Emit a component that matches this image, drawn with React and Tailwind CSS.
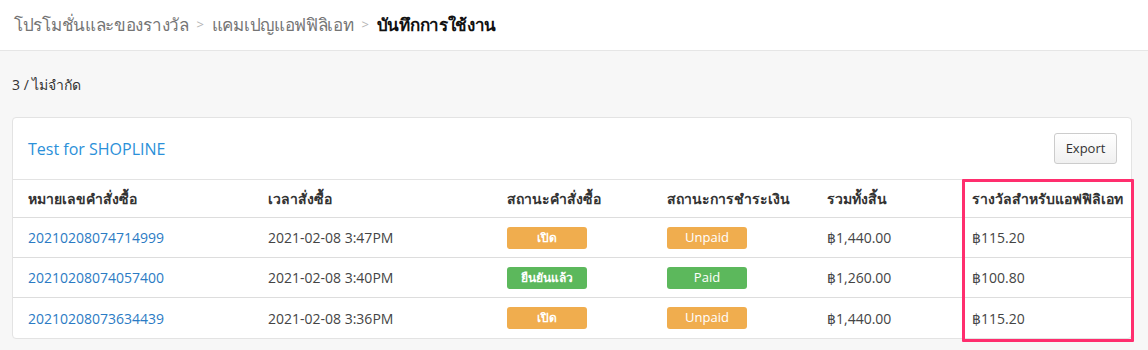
import React from "react";

const rows = [
  { id: "20210208074714999", time: "2021-02-08 3:47PM", status: "เปิด", statusColor: "bg-[#f0ad4e]", pay: "Unpaid", payColor: "bg-[#f0ad4e]", total: "฿1,440.00", reward: "฿115.20" },
  { id: "20210208074057400", time: "2021-02-08 3:40PM", status: "ยืนยันแล้ว", statusColor: "bg-[#5cb85c]", pay: "Paid", payColor: "bg-[#5cb85c]", total: "฿1,260.00", reward: "฿100.80" },
  { id: "20210208073634439", time: "2021-02-08 3:36PM", status: "เปิด", statusColor: "bg-[#f0ad4e]", pay: "Unpaid", payColor: "bg-[#f0ad4e]", total: "฿1,440.00", reward: "฿115.20" },
];

const grid = "grid grid-cols-[240px_239px_160px_160px_145px_1fr]";

export default function App() {
  return (
    <div className="relative w-[1148px] h-[350px] overflow-hidden bg-[#f7f7f7] text-[#333] font-['Open_Sans',sans-serif]">
      <div className="h-[51px] bg-white border-b border-[#e6e6e6] flex items-center pl-[14px] text-[17px] tracking-[-0.3px]">
        <span className="text-[#757575]">โปรโมชั่นและของรางวัล</span>
        <span className="text-[#b5b5b5] mx-[8px] text-[13px]">&gt;</span>
        <span className="text-[#757575]">แคมเปญแอฟฟิลิเอท</span>
        <span className="text-[#b5b5b5] mx-[8px] text-[13px]">&gt;</span>
        <span className="text-[#111] font-bold">บันทึกการใช้งาน</span>
      </div>
      <div className="px-[12px]">
        <div className="h-[66px] flex items-center text-[14px] text-[#333]">3 / ไม่จำกัด</div>
        <div className="w-[1120px] bg-white border border-[#e3e3e3] rounded-[4px]">
          <div className="h-[62px] flex items-center justify-between pl-[15px] pr-[14px] border-b border-[#e3e3e3]">
            <span className="text-[16px] text-[#2b90d9]">Test for SHOPLINE</span>
            <button className="w-[63px] h-[31px] rounded-[3px] border border-[#ccc] bg-gradient-to-b from-white to-[#f0f0f0] text-[13px] text-[#333]">Export</button>
          </div>
          <div className={`${grid} h-[38px] items-center border-b border-[#ddd] text-[14px] font-bold text-[#333]`}>
            <div className="pl-[15px]">หมายเลขคำสั่งซื้อ</div>
            <div className="pl-[15px]">เวลาสั่งซื้อ</div>
            <div className="pl-[15px]">สถานะคำสั่งซื้อ</div>
            <div className="pl-[15px]">สถานะการชำระเงิน</div>
            <div className="pl-[15px]">รวมทั้งสิ้น</div>
            <div className="pl-[15px]">รางวัลสำหรับแอฟฟิลิเอท</div>
          </div>
          {rows.map((r, i) => (
            <div key={r.id} className={`${grid} h-[40px] items-center text-[14px] text-[#444] ${i < rows.length - 1 ? "border-b border-[#ddd]" : ""}`}>
              <div className="pl-[15px] text-[#2b7bc4]">{r.id}</div>
              <div className="pl-[15px]">{r.time}</div>
              <div className="pl-[15px] flex">
                <span className={`inline-flex w-[80px] h-[22px] items-center justify-center rounded-[3px] text-white text-[12px] font-bold ${r.statusColor}`}>{r.status}</span>
              </div>
              <div className="pl-[15px] flex">
                <span className={`inline-flex w-[80px] h-[22px] items-center justify-center rounded-[3px] text-white text-[13px] ${r.payColor}`}>{r.pay}</span>
              </div>
              <div className="pl-[15px]">{r.total}</div>
              <div className="pl-[15px]">{r.reward}</div>
            </div>
          ))}
        </div>
      </div>
      <div className="absolute left-[962px] top-[179px] w-[172px] h-[163px] border-[3px] border-[#ff2e6e] rounded-[1px]" />
    </div>
  );
}
